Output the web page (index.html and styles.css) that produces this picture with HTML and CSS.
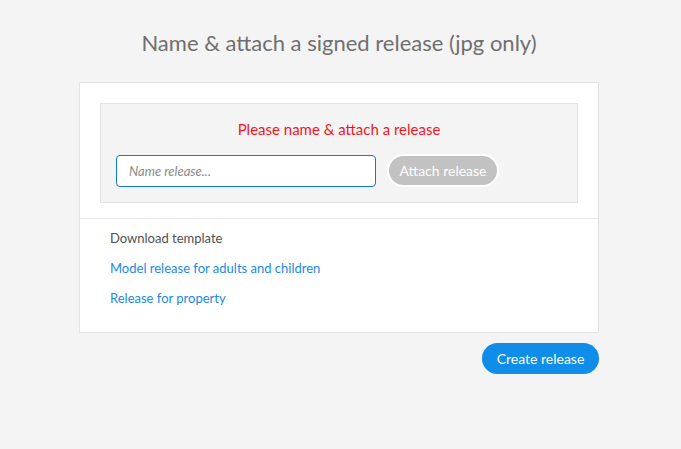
FILE: index.html
```html
<!DOCTYPE html>
<html>
<head>
<meta charset="utf-8">
<link rel="stylesheet" href="styles.css">
</head>
<body>
<div class="page">
  <h1 class="title">Name &amp; attach a signed release (jpg only)</h1>
  <div class="card">
    <div class="card-top">
      <div class="attach-box">
        <p class="error">Please name &amp; attach a release</p>
        <div class="attach-row">
          <input class="name-input" type="text" placeholder="Name release...">
          <button class="attach-btn">Attach release</button>
        </div>
      </div>
    </div>
    <div class="templates">
      <div class="tpl-head">Download template</div>
      <a class="tpl-link" href="#">Model release for adults and children</a>
      <a class="tpl-link" href="#">Release for property</a>
    </div>
  </div>
  <div class="actions">
    <button class="create-btn">Create release</button>
  </div>
</div>
</body>
</html>
```

FILE: styles.css
```css
html, body {
  margin: 0;
  padding: 0;
  background: #f4f4f4;
  font-family: Lato, "Open Sans", sans-serif;
}
.page {
  width: 520px;
  margin-left: 79px;
  padding-top: 27px;
}
.title {
  margin: 0;
  font-weight: 400;
  font-size: 22px;
  line-height: 32px;
  color: #6f6f6f;
  text-align: center;
}
.card {
  margin-top: 23px;
  background: #fff;
  border: 1px solid #e4e4e4;
}
.card-top {
  padding: 20px 20px 15px;
  border-bottom: 1px solid #e8e8e8;
}
.attach-box {
  background: #f4f4f4;
  border: 1px solid #e3e3e3;
  padding: 15px 15px 15px;
}
.error {
  margin: 0;
  text-align: center;
  color: #f5141b;
  font-size: 15px;
  line-height: 20px;
}
.attach-row {
  display: flex;
  align-items: center;
  gap: 11px;
  margin-top: 15px;
}
.name-input {
  box-sizing: border-box;
  width: 260px;
  height: 32px;
  border: 1px solid #1473e6;
  border-radius: 4px;
  padding: 0 12px;
  font-family: inherit;
  font-size: 13px;
  background: #fff;
  outline: none;
}
.name-input::placeholder {
  color: #8a8a8a;
  font-style: italic;
}
.attach-btn {
  box-sizing: border-box;
  width: 112px;
  height: 33px;
  border: 2px solid #fff;
  border-radius: 17px;
  background: #c2c2c2;
  color: #fff;
  font-family: inherit;
  font-size: 14px;
  padding: 0;
}
.templates {
  display: flex;
  flex-direction: column;
  align-items: flex-start;
  padding: 4px 30px 19px;
}
.tpl-head {
  font-size: 13px;
  line-height: 30px;
  color: #505050;
}
.tpl-link {
  font-size: 13px;
  line-height: 30px;
  color: #1b88e8;
  text-decoration: none;
}
.actions {
  display: flex;
  justify-content: flex-end;
  margin-top: 10px;
}
.create-btn {
  width: 117px;
  height: 31px;
  border: none;
  border-radius: 16px;
  background: #108de9;
  color: #fff;
  font-family: inherit;
  font-size: 14px;
  padding: 0;
}
```
